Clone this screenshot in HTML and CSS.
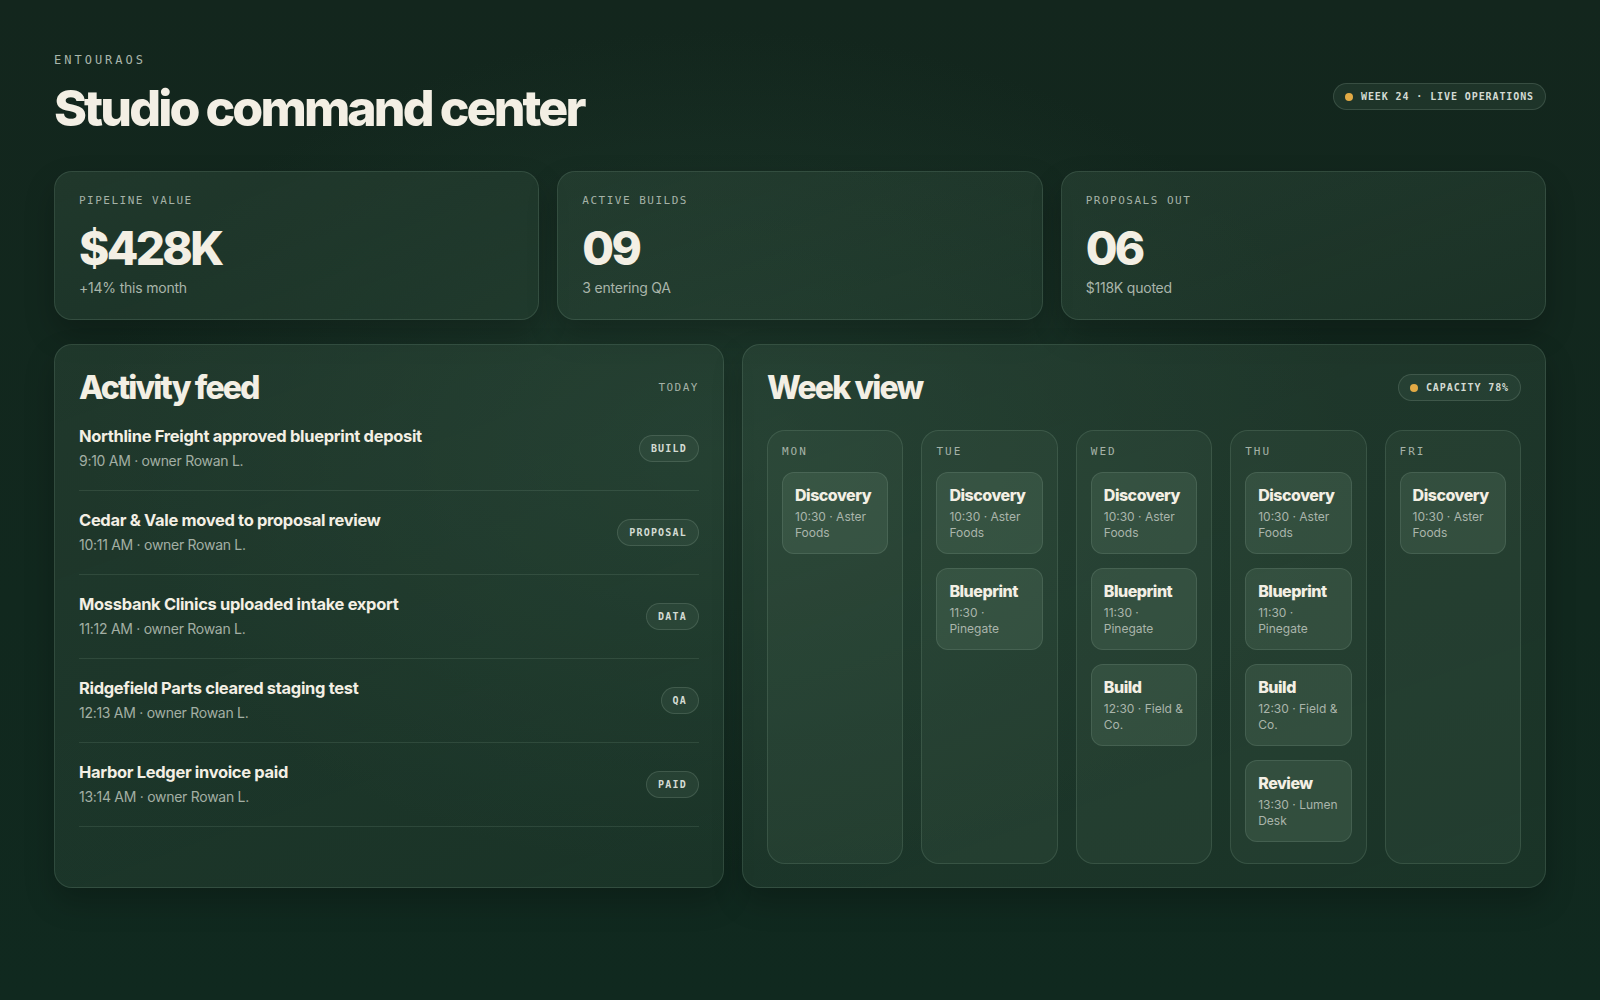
FILE: index.html
```html
<!DOCTYPE html>
<html lang="en">
<head>
    <meta charset="UTF-8">
    <meta name="viewport" content="width=device-width, initial-scale=1.0">
    <title>EntouraOS · Studio command center</title>
    <link rel="stylesheet" href="styles.css">
</head>
<body>
    <div class="page">
        <header class="top">
            <div>
                <div class="brand">ENTOURAOS</div>
                <h1>Studio command center</h1>
            </div>
            <div class="pill pill-status"><span class="dot"></span>WEEK 24 · LIVE OPERATIONS</div>
        </header>

        <section class="stats">
            <div class="card stat">
                <div class="label">PIPELINE VALUE</div>
                <div class="stat-value">$428K</div>
                <div class="stat-note">+14% this month</div>
            </div>
            <div class="card stat">
                <div class="label">ACTIVE BUILDS</div>
                <div class="stat-value">09</div>
                <div class="stat-note">3 entering QA</div>
            </div>
            <div class="card stat">
                <div class="label">PROPOSALS OUT</div>
                <div class="stat-value">06</div>
                <div class="stat-note">$118K quoted</div>
            </div>
        </section>

        <section class="main">
            <div class="card panel">
                <div class="panel-head">
                    <h2>Activity feed</h2>
                    <span class="label">TODAY</span>
                </div>
                <ul class="feed">
                    <li class="feed-row">
                        <div>
                            <div class="feed-title">Northline Freight approved blueprint deposit</div>
                            <div class="feed-meta">9:10 AM · owner Rowan L.</div>
                        </div>
                        <span class="tag">BUILD</span>
                    </li>
                    <li class="feed-row">
                        <div>
                            <div class="feed-title">Cedar &amp; Vale moved to proposal review</div>
                            <div class="feed-meta">10:11 AM · owner Rowan L.</div>
                        </div>
                        <span class="tag">PROPOSAL</span>
                    </li>
                    <li class="feed-row">
                        <div>
                            <div class="feed-title">Mossbank Clinics uploaded intake export</div>
                            <div class="feed-meta">11:12 AM · owner Rowan L.</div>
                        </div>
                        <span class="tag">DATA</span>
                    </li>
                    <li class="feed-row">
                        <div>
                            <div class="feed-title">Ridgefield Parts cleared staging test</div>
                            <div class="feed-meta">12:13 AM · owner Rowan L.</div>
                        </div>
                        <span class="tag">QA</span>
                    </li>
                    <li class="feed-row">
                        <div>
                            <div class="feed-title">Harbor Ledger invoice paid</div>
                            <div class="feed-meta">13:14 AM · owner Rowan L.</div>
                        </div>
                        <span class="tag">PAID</span>
                    </li>
                </ul>
            </div>

            <div class="card panel">
                <div class="panel-head week-head">
                    <h2>Week view</h2>
                    <div class="pill"><span class="dot"></span>CAPACITY 78%</div>
                </div>
                <div class="week">
                    <div class="day">
                        <div class="day-name">MON</div>
                        <div class="event"><b>Discovery</b><span>10:30 · Aster Foods</span></div>
                    </div>
                    <div class="day">
                        <div class="day-name">TUE</div>
                        <div class="event"><b>Discovery</b><span>10:30 · Aster Foods</span></div>
                        <div class="event"><b>Blueprint</b><span>11:30 · Pinegate</span></div>
                    </div>
                    <div class="day">
                        <div class="day-name">WED</div>
                        <div class="event"><b>Discovery</b><span>10:30 · Aster Foods</span></div>
                        <div class="event"><b>Blueprint</b><span>11:30 · Pinegate</span></div>
                        <div class="event"><b>Build</b><span>12:30 · Field &amp; Co.</span></div>
                    </div>
                    <div class="day">
                        <div class="day-name">THU</div>
                        <div class="event"><b>Discovery</b><span>10:30 · Aster Foods</span></div>
                        <div class="event"><b>Blueprint</b><span>11:30 · Pinegate</span></div>
                        <div class="event"><b>Build</b><span>12:30 · Field &amp; Co.</span></div>
                        <div class="event"><b>Review</b><span>13:30 · Lumen Desk</span></div>
                    </div>
                    <div class="day">
                        <div class="day-name">FRI</div>
                        <div class="event"><b>Discovery</b><span>10:30 · Aster Foods</span></div>
                    </div>
                </div>
            </div>
        </section>
    </div>
</body>
</html>
```

FILE: styles.css
```css
* {
    box-sizing: border-box;
}
body {
    margin: 0;
    min-height: 1000px;
    font-family: Inter, "Noto Sans", sans-serif;
    color: #f3efe4;
    background-color: #0f241b;
    background-image:
        radial-gradient(ellipse 900px 600px at 45% 45%, rgba(40, 72, 56, 0.55), rgba(40, 72, 56, 0) 70%),
        linear-gradient(180deg, #13261d 0%, #11281e 60%, #10291f 100%);
}
.page {
    padding: 50px 54px 0;
}

/* header */
.top {
    display: flex;
    justify-content: space-between;
    align-items: flex-start;
}
.brand {
    font-family: "DejaVu Sans Mono", monospace;
    font-size: 12px;
    letter-spacing: 3px;
    color: #a9b6ab;
    line-height: 20px;
}
h1 {
    margin: 8px 0 0;
    font-size: 50px;
    line-height: 60px;
    font-weight: 800;
    letter-spacing: -0.058em;
}
.pill {
    display: inline-flex;
    align-items: center;
    gap: 8px;
    height: 27px;
    padding: 0 11px;
    border: 1px solid rgba(190, 220, 200, 0.16);
    border-radius: 14px;
    background: rgba(60, 90, 74, 0.28);
    font-family: "DejaVu Sans Mono", monospace;
    font-size: 10px;
    font-weight: 700;
    letter-spacing: 0.9px;
    color: #d4dbd3;
}
.pill-status {
    margin-top: 33px;
}
.dot {
    width: 8px;
    height: 8px;
    border-radius: 50%;
    background: #e2aa45;
}

/* cards */
.card {
    border: 1px solid rgba(180, 210, 190, 0.14);
    border-radius: 18px;
    background: linear-gradient(160deg, rgba(52, 80, 64, 0.42), rgba(44, 72, 56, 0.36));
    box-shadow: 0 14px 30px rgba(0, 0, 0, 0.22);
}
.label {
    font-family: "DejaVu Sans Mono", monospace;
    font-size: 11px;
    letter-spacing: 1.5px;
    color: #a5b2a7;
}

.stats {
    display: grid;
    grid-template-columns: repeat(3, 1fr);
    gap: 18px;
    margin-top: 33px;
}
.stat {
    height: 149px;
    padding: 22px 24px;
}
.stat-value {
    margin-top: 16px;
    font-size: 46px;
    line-height: 50px;
    font-weight: 800;
    letter-spacing: -0.058em;
}
.stat-note {
    margin-top: 6px;
    font-size: 14px;
    letter-spacing: -0.015em;
    color: #a9b5aa;
}

/* lower panels */
.main {
    display: grid;
    grid-template-columns: 5fr 6fr;
    gap: 18px;
    margin-top: 24px;
}
.panel {
    height: 544px;
    padding: 23px 24px;
}
.panel-head {
    display: flex;
    justify-content: space-between;
    align-items: center;
    height: 39px;
}
h2 {
    margin: 0;
    font-size: 32px;
    font-weight: 800;
    letter-spacing: -0.058em;
}

.feed {
    list-style: none;
    margin: 0;
    padding: 0;
}
.feed-row {
    display: flex;
    justify-content: space-between;
    align-items: center;
    padding: 19px 0;
    border-bottom: 1px solid rgba(180, 210, 190, 0.12);
}
.feed-title {
    font-size: 16.5px;
    line-height: 20px;
    font-weight: 700;
    letter-spacing: -0.02em;
}
.feed-meta {
    margin-top: 5px;
    font-size: 14px;
    line-height: 20px;
    letter-spacing: -0.02em;
    color: #a3afa4;
}
.tag {
    height: 27px;
    display: inline-flex;
    align-items: center;
    padding: 0 11px;
    border: 1px solid rgba(190, 220, 200, 0.16);
    border-radius: 14px;
    background: rgba(70, 100, 84, 0.25);
    font-family: "DejaVu Sans Mono", monospace;
    font-size: 10px;
    font-weight: 700;
    letter-spacing: 1.2px;
    color: #d4dbd3;
}

/* week grid */
.week-head {
    margin-bottom: 23px;
}
.week {
    display: grid;
    grid-template-columns: repeat(5, 1fr);
    gap: 18px;
}
.day {
    height: 434px;
    padding: 14px;
    border: 1px solid rgba(180, 210, 190, 0.14);
    border-radius: 18px;
    background: rgba(70, 100, 82, 0.2);
}
.day-name {
    font-family: "DejaVu Sans Mono", monospace;
    font-size: 11px;
    letter-spacing: 2px;
    line-height: 14px;
    color: #a5b2a7;
    margin-bottom: 13px;
}
.event {
    display: flex;
    flex-direction: column;
    gap: 4px;
    height: 82px;
    margin-bottom: 14px;
    padding: 12px 12px;
    border: 1px solid rgba(190, 220, 200, 0.13);
    border-radius: 12px;
    background: rgba(90, 122, 102, 0.28);
}
.event b {
    font-size: 16px;
    line-height: 20px;
    font-weight: 800;
    letter-spacing: -0.03em;
}
.event span {
    font-size: 12px;
    line-height: 15.5px;
    color: #aab5ab;
}
```
